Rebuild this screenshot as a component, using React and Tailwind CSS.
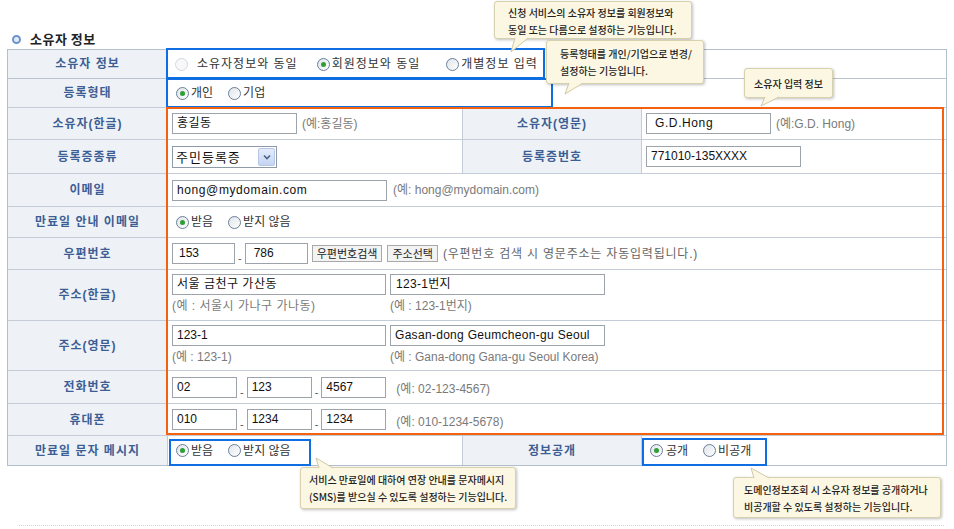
import React from 'react';

const Radio = ({ checked, disabled }) => (
  <span
    className={`inline-flex items-center justify-center w-[13px] h-[13px] shrink-0 rounded-full border ${
      disabled ? 'border-[#d3d8de] bg-[#f8f8f8]' : 'border-[#6a7f9a] bg-gradient-to-br from-[#dfe4ea] to-white'
    }`}
  >
    {checked && <span className="w-[5px] h-[5px] rounded-full bg-[#2f9e35]" />}
  </span>
);

const Field = ({ className = '', children }) => (
  <div
    className={`h-[21px] shrink-0 border border-[#9ca3aa] bg-white px-[4px] text-[12px] leading-[19px] text-[#111] whitespace-nowrap overflow-hidden font-['Liberation_Sans','Noto_Sans_CJK_KR',sans-serif] ${className}`}
  >
    {children}
  </div>
);

const Label = ({ children, className = 'w-[160px] border-r' }) => (
  <div
    className={`${className} shrink-0 border-[#c4cdd7] bg-[#eef2f7] flex items-center justify-center text-[12px] font-bold tracking-[1px] text-[#3d5e94]`}
  >
    {children}
  </div>
);

const Hint = ({ children, className = '' }) => (
  <span className={`text-[12px] text-[#7a7a7a] whitespace-nowrap ${className}`}>{children}</span>
);

const Dash = () => <span className="self-end mb-[5px] mx-[3px] text-[11px] leading-none text-[#555]">-</span>;

const Tip = ({ className, lines, center }) => (
  <div
    className={`absolute ${className} bg-[#fbf7e2] border border-[#d8d1ae] rounded-[3px] shadow-[1px_1px_3px_rgba(0,0,0,0.25)] font-['Noto_Sans_CJK_KR',sans-serif] font-medium text-[10px] tracking-normal leading-[17px] text-[#222] whitespace-nowrap ${
      center ? 'flex items-center justify-center' : ''
    }`}
  >
    <div>
      {lines.map((l) => (
        <div key={l}>{l}</div>
      ))}
    </div>
  </div>
);

const pointers = [
  { fill: '515,38 528,38 511,52', edge: '515,38 511,52 528,38' },
  { fill: '569,83 583,83 565,94', edge: '569,83 565,94 583,83' },
  { fill: '765,97 779,97 761,106', edge: '765,97 761,106 779,97' },
  { fill: '319,468 333,468 316,458', edge: '319,468 316,458 333,468' },
  { fill: '754,478 769,478 751,468', edge: '754,478 751,468 769,478' },
];

export default function App() {
  return (
    <div className="relative w-[954px] h-[529px] overflow-hidden bg-white font-['Liberation_Sans','Noto_Sans_CJK_KR',sans-serif] text-[#333]">
      <div className="pt-[29px] pl-[7px]">
        {/* section title */}
        <div className="h-[20px] flex items-center">
          <span className="ml-[5px] w-[9px] h-[9px] rounded-full border-2 border-[#6a93cf] bg-[#e4ecf8]" />
          <span className="ml-[9px] text-[13px] font-bold text-[#222] tracking-[0.5px] font-['Noto_Sans_CJK_KR',sans-serif]">
            소유자 정보
          </span>
        </div>

        <div className="w-[940px] border border-[#b3bfcc] text-[12px] font-['Liberation_Sans','Noto_Sans_CJK_KR',sans-serif]">
          {/* 소유자 정보 */}
          <div className="flex h-[29px] border-b border-[#b9c4d0]">
            <Label>소유자 정보</Label>
            <div className="flex-1 flex items-center pl-[7px] text-[#333] tracking-[1px]">
              <Radio disabled />
              <span className="ml-[9px]">소유자정보와 동일</span>
              <span className="ml-[19px]" />
              <Radio checked />
              <span className="ml-[2px]">회원정보와 동일</span>
              <span className="ml-[26px]" />
              <Radio />
              <span className="ml-[2px]">개별정보 입력</span>
            </div>
          </div>

          {/* 등록형태 */}
          <div className="flex h-[29px] border-b border-[#c4cdd7]">
            <Label>등록형태</Label>
            <div className="flex-1 flex items-center pl-[8px]">
              <Radio checked />
              <span className="ml-[2px]">개인</span>
              <span className="ml-[15px]" />
              <Radio />
              <span className="ml-[2px]">기업</span>
            </div>
          </div>

          {/* 소유자(한글) / 소유자(영문) */}
          <div className="flex h-[32px] border-b border-[#c4cdd7]">
            <Label>소유자(한글)</Label>
            <div className="w-[294px] shrink-0 flex items-center pl-[4px]">
              <Field className="w-[125px] tracking-[0.5px]">홍길동</Field>
              <Hint className="ml-[5px] text-[11px]">(예:홍길동)</Hint>
            </div>
            <Label className="w-[180px] border-l border-r">소유자(영문)</Label>
            <div className="flex-1 flex items-center pl-[4px]">
              <Field className="w-[125px] pl-[8px] tracking-[0.6px]">G.D.Hong</Field>
              <Hint className="ml-[5px] text-[11px]">(예:G.D. Hong)</Hint>
            </div>
          </div>

          {/* 등록증종류 / 등록증번호 */}
          <div className="flex h-[34px] border-b border-[#c4cdd7]">
            <Label>등록증종류</Label>
            <div className="w-[294px] shrink-0 flex items-center pl-[4px]">
              <div className="w-[105px] h-[22px] border border-[#8e9aa8] bg-white flex items-center justify-between pl-[3px] pr-[1px]">
                <span className="text-[13px] tracking-[1px] text-[#111] font-['Noto_Sans_CJK_KR',sans-serif]">주민등록증</span>
                <span className="w-[17px] h-[18px] rounded-[2px] border border-[#b7c8e6] bg-gradient-to-b from-[#e4ecfb] to-[#c4d5f2] flex items-center justify-center">
                  <svg width="8" height="6" viewBox="0 0 8 6">
                    <path d="M1 1.5 L4 4.5 L7 1.5" fill="none" stroke="#4d6185" strokeWidth="1.6" />
                  </svg>
                </span>
              </div>
            </div>
            <Label className="w-[180px] border-l border-r">등록증번호</Label>
            <div className="flex-1 flex items-center pl-[4px]">
              <Field className="w-[155px]">771010-135XXXX</Field>
            </div>
          </div>

          {/* 이메일 */}
          <div className="flex h-[33px] border-b border-[#c4cdd7]">
            <Label>이메일</Label>
            <div className="flex-1 flex items-center pl-[4px]">
              <Field className="w-[215px] tracking-[0.6px]">hong@mydomain.com</Field>
              <Hint className="ml-[6px]">(예: hong@mydomain.com)</Hint>
            </div>
          </div>

          {/* 만료일 안내 이메일 */}
          <div className="flex h-[31px] border-b border-[#c4cdd7]">
            <Label>만료일 안내 이메일</Label>
            <div className="flex-1 flex items-center pl-[8px]">
              <Radio checked />
              <span className="ml-[2px]">받음</span>
              <span className="ml-[15px]" />
              <Radio />
              <span className="ml-[2px]">받지 않음</span>
            </div>
          </div>

          {/* 우편번호 */}
          <div className="flex h-[32px] border-b border-[#c4cdd7]">
            <Label>우편번호</Label>
            <div className="flex-1 flex items-center pl-[4px]">
              <Field className="w-[63px] pl-[6px]">153</Field>
              <Dash />
              <Field className="w-[63px] pl-[8px]">786</Field>
              <button className="ml-[4px] h-[17px] px-[4px] border border-[#a9a9a9] bg-[#f3f3f3] text-[11px] leading-[15px] text-[#222] font-['Noto_Sans_CJK_KR',sans-serif]">
                우편번호검색
              </button>
              <button className="ml-[5px] h-[17px] px-[4px] border border-[#a9a9a9] bg-[#f3f3f3] text-[11px] leading-[15px] text-[#222] font-['Noto_Sans_CJK_KR',sans-serif]">
                주소선택
              </button>
              <Hint className="ml-[5px] text-[#666] tracking-[0.8px]">(우편번호 검색 시 영문주소는 자동입력됩니다.)</Hint>
            </div>
          </div>

          {/* 주소(한글) */}
          <div className="flex h-[51px] border-b border-[#c4cdd7]">
            <Label>주소(한글)</Label>
            <div className="flex-1 flex pl-[4px] pt-[4px] gap-[4px]">
              <div className="flex flex-col gap-[4px]">
                <Field className="w-[214px] tracking-[0.5px] px-[2px]">서울 금천구 가산동</Field>
                <Hint className="text-[11px] leading-[14px] tracking-[0.5px]">(예 : 서울시 가나구 가나동)</Hint>
              </div>
              <div className="flex flex-col gap-[4px]">
                <Field className="w-[215px] pl-[5px] tracking-[0.3px]">123-1번지</Field>
                <Hint className="text-[11px] leading-[14px]">(예 : 123-1번지)</Hint>
              </div>
            </div>
          </div>

          {/* 주소(영문) */}
          <div className="flex h-[50px] border-b border-[#c4cdd7]">
            <Label>주소(영문)</Label>
            <div className="flex-1 flex pl-[4px] pt-[4px] gap-[4px]">
              <div className="flex flex-col gap-[4px]">
                <Field className="w-[214px] px-[2px]">123-1</Field>
                <Hint className="text-[11px] leading-[14px]">(예 : 123-1)</Hint>
              </div>
              <div className="flex flex-col gap-[4px]">
                <Field className="w-[215px] px-[2px] tracking-[0.3px]">Gasan-dong Geumcheon-gu Seoul</Field>
                <Hint className="text-[11px] leading-[14px]">(예 : Gana-dong Gana-gu Seoul Korea)</Hint>
              </div>
            </div>
          </div>

          {/* 전화번호 */}
          <div className="flex h-[33px] border-b border-[#c4cdd7]">
            <Label>전화번호</Label>
            <div className="flex-1 flex items-center pl-[4px]">
              <Field className="w-[65px] px-[1px] leading-[15px]">02</Field>
              <Dash />
              <Field className="w-[65px] px-[1px] leading-[15px]">123</Field>
              <Dash />
              <Field className="w-[65px] px-[1px] leading-[15px]">4567</Field>
              <Hint className="ml-[10px] mt-[4px]">(예: 02-123-4567)</Hint>
            </div>
          </div>

          {/* 휴대폰 */}
          <div className="flex h-[32px] border-b border-[#c4cdd7]">
            <Label>휴대폰</Label>
            <div className="flex-1 flex items-center pl-[4px]">
              <Field className="w-[65px] px-[1px] leading-[19px]">010</Field>
              <Dash />
              <Field className="w-[65px] px-[1px] leading-[19px]">1234</Field>
              <Dash />
              <Field className="w-[65px] px-[1px] leading-[15px]">1234</Field>
              <Hint className="ml-[10px] mt-[4px]">(예: 010-1234-5678)</Hint>
            </div>
          </div>

          {/* 만료일 문자 메시지 / 정보공개 */}
          <div className="flex h-[29px]">
            <Label>만료일 문자 메시지</Label>
            <div className="w-[294px] shrink-0 flex items-center pl-[8px]">
              <Radio checked />
              <span className="ml-[2px]">받음</span>
              <span className="ml-[15px]" />
              <Radio />
              <span className="ml-[2px]">받지 않음</span>
            </div>
            <Label className="w-[180px] border-l border-r">정보공개</Label>
            <div className="flex-1 flex items-center pl-[8px]">
              <Radio checked />
              <span className="ml-[3px]">공개</span>
              <span className="ml-[15px]" />
              <Radio />
              <span className="ml-[2px]">비공개</span>
            </div>
          </div>
        </div>

        <div className="mt-[59px] ml-[12px] w-[925px] border-t border-dotted border-[#d6d6d6]" />
      </div>

      {/* highlight frames */}
      <div className="absolute left-[166px] top-[48px] w-[379px] h-[31px] border-2 border-[#0e6ee2]" />
      <div className="absolute left-[166px] top-[78px] w-[387px] h-[30px] border-2 border-[#0e6ee2]" />
      <div className="absolute left-[166px] top-[107px] w-[778px] h-[328px] border-2 border-[#f5620f]" />
      <div className="absolute left-[169px] top-[439px] w-[142px] h-[27px] border-2 border-[#0e6ee2]" />
      <div className="absolute left-[642px] top-[438px] w-[125px] h-[28px] border-2 border-[#0e6ee2]" />

      {/* tooltips */}
      <Tip
        className="left-[494px] top-[1px] w-[198px] h-[38px] pl-[13px] pt-[2px]"
        lines={['신청 서비스의 소유자 정보를 회원정보와', '동일 또는 다름으로 설정하는 기능입니다.']}
      />
      <Tip
        className="left-[546px] top-[40px] w-[158px] h-[44px] pl-[13px] pt-[4px]"
        lines={['등록형태를 개인/기업으로 변경/', '설정하는 기능입니다.']}
      />
      <Tip className="left-[744px] top-[68px] w-[89px] h-[30px]" center lines={['소유자 입력 정보']} />
      <Tip
        className="left-[300px] top-[467px] w-[216px] h-[42px] pl-[8px] pt-[3px]"
        lines={['서비스 만료일에 대하여 연장 안내를 문자메시지', '(SMS)를 받으실 수 있도록 설정하는 기능입니다.']}
      />
      <Tip
        className="left-[733px] top-[477px] w-[208px] h-[41px] pl-[10px] pt-[3px]"
        lines={['도메인정보조회 시 소유자 정보를 공개하거나', '비공개할 수 있도록 설정하는 기능입니다.']}
      />
      <svg className="absolute left-0 top-0 pointer-events-none" width="954" height="529">
        {pointers.map((p) => (
          <g key={p.fill}>
            <polygon points={p.fill} fill="#fbf7e2" />
            <polyline points={p.edge} fill="none" stroke="#d0c9a5" strokeWidth="1" />
          </g>
        ))}
      </svg>
    </div>
  );
}
